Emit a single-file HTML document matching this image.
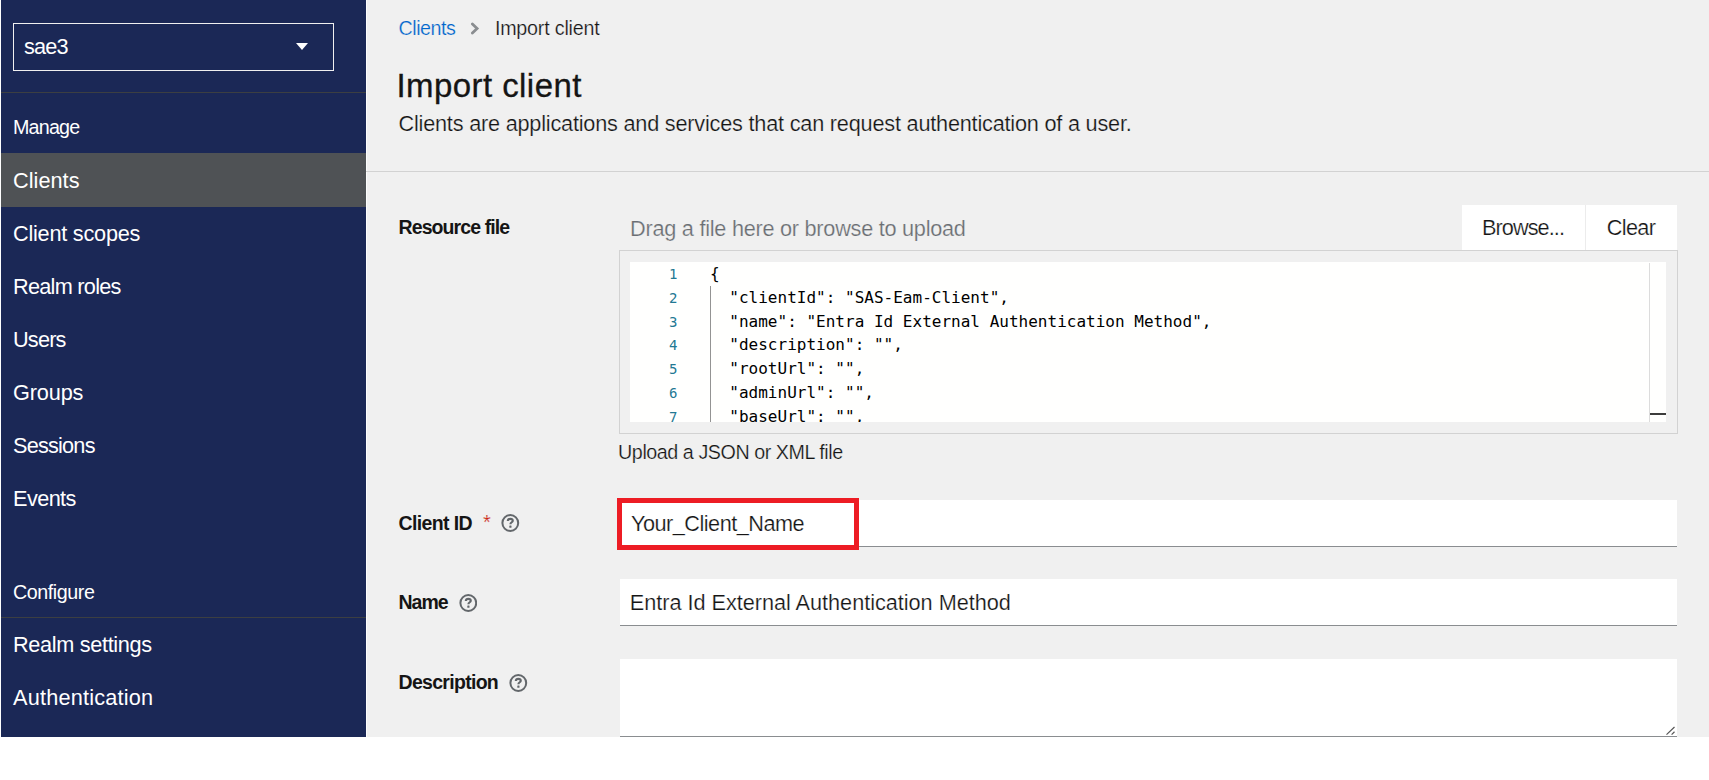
<!DOCTYPE html>
<html lang="en">
<head>
<meta charset="utf-8">
<title>Import client</title>
<style>
*{box-sizing:border-box;margin:0;padding:0}
html,body{width:1709px;height:780px;overflow:hidden;background:#fff}
body{position:relative;font-family:"Liberation Sans",sans-serif;color:#151515;font-size:21.7px}
.t{position:absolute;white-space:pre;line-height:1;-webkit-text-stroke:.22px #f0f0f0}
#side .t,.lbl{-webkit-text-stroke:0}
.in .t,.btn .t{-webkit-text-stroke:.22px #fff}

/* sidebar */
#side{position:absolute;left:1px;top:0;width:365px;height:737px;background:#1b2856;color:#fff}
#realm{position:absolute;left:12px;top:23px;width:321px;height:48px;border:1px solid #f0f0f0}
#realm .t{left:10px;top:12.4px;font-size:21.7px;letter-spacing:-.86px}
#caret{position:absolute;left:282.2px;top:19px;width:0;height:0;border-left:6.7px solid transparent;border-right:6.7px solid transparent;border-top:7.8px solid #fff}
.sep{position:absolute;left:0;width:365px;height:1px;background:#3c3f42}
.sec{font-size:19.7px;left:12px}
#nav,#nav2{list-style:none;position:absolute;left:0;width:365px}
#nav{top:153px}
#nav2{top:617.5px}
#nav li,#nav2 li{position:relative;height:53px;width:365px}
#nav li.cur{background:#4f5255;height:54px;margin-bottom:-1px}
#nav li .t,#nav2 li .t{left:12px;top:17px;font-size:21.7px}
#nav2 li .t{top:16.3px}

/* main */
#main{position:absolute;left:366px;top:0;width:1343px;height:737px;background:#f0f0f0}
#gap{position:absolute;left:0;top:0;width:1px;height:737px;background:#fdfdfd}
#hr{position:absolute;left:0;top:171px;width:1343px;height:1px;background:#d2d2d2}
.crumb{font-size:19.7px;top:19.3px}
a{color:#0066cc;text-decoration:none}
h1{font-weight:400;font-size:33px;left:30.4px;top:68.8px}
h1.t{-webkit-text-stroke:.3px #151515}
.lbl{font-weight:700;font-size:19.5px;left:32.5px}
.help{position:absolute;width:18.6px;height:18px}
.in{position:absolute;left:254px;width:1057px;background:#fff;border-bottom:1px solid #8a8d90}
.in .t{left:11px;top:13.1px}

/* file upload */
#fname{left:264.1px;top:218.4px;color:#6a6e73}
.btn{position:absolute;top:205px;height:45px;background:#fff}
.btn .t{top:12px}
#box{position:absolute;left:253px;top:250px;width:1059px;height:184px;border:1px solid #d2d2d2}
#ed{position:absolute;left:10px;top:11px;width:1036px;height:160px;background:#fffffe;overflow:hidden;font-family:"DejaVu Sans Mono","Liberation Mono",monospace;font-size:16px}
#ed ol{list-style:none}
#ed li{position:relative;height:23.75px}
#ed .n{position:absolute;left:0;width:47.5px;text-align:right;color:#237893;line-height:23.75px;top:0;font-size:14px;padding-top:1px;letter-spacing:0}
#ed .c{position:absolute;left:80px;line-height:23.75px;top:0;white-space:pre;color:#000;letter-spacing:.01px}
#guide{position:absolute;left:80px;top:24px;width:1px;height:140px;background:#939393}
#ruler{position:absolute;left:1019px;top:1px;width:1px;height:159px;background:#dcdcdc}
#cur{position:absolute;left:1020px;top:151px;width:16px;height:2px;background:#3c3c3c}
#redbox{position:absolute;left:251px;top:498px;width:242px;height:52px;border:5px solid #ed1c24}
</style>
</head>
<body>
<nav id="side">
  <div id="realm"><span class="t">sae3</span><i id="caret"></i></div>
  <div class="sep" style="top:92px"></div>
  <span class="t sec" style="top:117.7px;letter-spacing:-.8px">Manage</span>
  <div class="sep" style="top:152.5px"></div>
  <ul id="nav">
    <li class="cur"><span class="t" style="letter-spacing:.03px">Clients</span></li>
    <li><span class="t" style="letter-spacing:-.23px">Client scopes</span></li>
    <li><span class="t" style="letter-spacing:-.73px">Realm roles</span></li>
    <li><span class="t" style="letter-spacing:-.8px">Users</span></li>
    <li><span class="t" style="letter-spacing:-.14px">Groups</span></li>
    <li><span class="t" style="letter-spacing:-.79px">Sessions</span></li>
    <li><span class="t" style="letter-spacing:-.58px">Events</span></li>
  </ul>
  <span class="t sec" style="top:583.2px;letter-spacing:-.44px">Configure</span>
  <div class="sep" style="top:617px"></div>
  <ul id="nav2">
    <li><span class="t" style="letter-spacing:-.33px">Realm settings</span></li>
    <li><span class="t" style="letter-spacing:.21px">Authentication</span></li>
  </ul>
</nav>

<main id="main">
  <div id="gap"></div>
  <a class="t crumb" style="left:32.5px;letter-spacing:-.47px">Clients</a>
  <svg style="position:absolute;left:104px;top:22px" width="10" height="13" viewBox="0 0 10 13"><path d="M2.4 1.9 L7.1 6.5 L2.4 11.1" fill="none" stroke="#8a8d90" stroke-width="2.8" stroke-linecap="round"/></svg>
  <span class="t crumb" style="left:128.9px;letter-spacing:-.2px">Import client</span>
  <h1 class="t" style="letter-spacing:.44px">Import client</h1>
  <p class="t" style="left:32.5px;top:112.9px;letter-spacing:-.21px">Clients are applications and services that can request authentication of a user.</p>
  <div id="hr"></div>

  <label class="t lbl" style="top:217.9px;letter-spacing:-.9px">Resource file</label>
  <span class="t" id="fname" style="letter-spacing:-.257px">Drag a file here or browse to upload</span>
  <div class="btn" style="left:1096px;width:123px"><span class="t" style="left:19.9px;letter-spacing:-.91px">Browse...</span></div>
  <div class="btn" style="left:1220px;width:91px"><span class="t" style="left:20.8px;letter-spacing:-.67px">Clear</span></div>
  <div style="position:absolute;left:1219px;top:205px;width:1px;height:45px;background:#ececec"></div>
  <div id="box">
    <div id="ed">
      <ol>
        <li><span class="n">1</span><span class="c">{</span></li>
        <li><span class="n">2</span><span class="c">  "clientId": "SAS-Eam-Client",</span></li>
        <li><span class="n">3</span><span class="c">  "name": "Entra Id External Authentication Method",</span></li>
        <li><span class="n">4</span><span class="c">  "description": "",</span></li>
        <li><span class="n">5</span><span class="c">  "rootUrl": "",</span></li>
        <li><span class="n">6</span><span class="c">  "adminUrl": "",</span></li>
        <li><span class="n">7</span><span class="c">  "baseUrl": "",</span></li>
      </ol>
      <div id="guide"></div>
      <div id="ruler"></div>
      <div id="cur"></div>
    </div>
  </div>
  <span class="t" style="left:252.1px;top:442.6px;font-size:19.7px;letter-spacing:-.44px">Upload a JSON or XML file</span>

  <label class="t lbl" style="top:513.7px;letter-spacing:-.61px">Client ID</label>
  <span class="t" style="left:117px;top:511.5px;font-size:20px;color:#c9190b">*</span>
  <svg class="help" style="left:135px;top:514px" viewBox="0 0 18 18"><circle cx="9" cy="9" r="7.9" fill="none" stroke="#63676b" stroke-width="2"/><path d="M6.5 7 C6.6 5.5 7.7 4.9 9 4.9 C10.4 4.9 11.5 5.6 11.5 6.8 C11.5 8.3 9.1 8.3 9.1 10.3" fill="none" stroke="#63676b" stroke-width="2.1"/><rect x="8" y="11.6" width="2.2" height="2.1" rx=".5" fill="#63676b"/></svg>
  <div class="in" style="top:500px;height:47px"><span class="t" style="letter-spacing:-.51px">Your_Client_Name</span></div>
  <div id="redbox"></div>

  <label class="t lbl" style="top:593.3px;letter-spacing:-1px">Name</label>
  <svg class="help" style="left:92.8px;top:593.5px" viewBox="0 0 18 18"><circle cx="9" cy="9" r="7.9" fill="none" stroke="#63676b" stroke-width="2"/><path d="M6.5 7 C6.6 5.5 7.7 4.9 9 4.9 C10.4 4.9 11.5 5.6 11.5 6.8 C11.5 8.3 9.1 8.3 9.1 10.3" fill="none" stroke="#63676b" stroke-width="2.1"/><rect x="8" y="11.6" width="2.2" height="2.1" rx=".5" fill="#63676b"/></svg>
  <div class="in" style="top:579px;height:47px"><span class="t" style="left:9.8px;letter-spacing:-.03px">Entra Id External Authentication Method</span></div>

  <label class="t lbl" style="top:673.3px;letter-spacing:-.7px">Description</label>
  <svg class="help" style="left:143px;top:673.6px" viewBox="0 0 18 18"><circle cx="9" cy="9" r="7.9" fill="none" stroke="#63676b" stroke-width="2"/><path d="M6.5 7 C6.6 5.5 7.7 4.9 9 4.9 C10.4 4.9 11.5 5.6 11.5 6.8 C11.5 8.3 9.1 8.3 9.1 10.3" fill="none" stroke="#63676b" stroke-width="2.1"/><rect x="8" y="11.6" width="2.2" height="2.1" rx=".5" fill="#63676b"/></svg>
  <div class="in" style="top:659px;height:78px">
    <svg style="position:absolute;right:1px;bottom:0" width="11" height="11" viewBox="0 0 11 11"><path d="M1.5 9.6 L9.5 2 M6.6 9.6 L9.5 6.8" stroke="#555" stroke-width="1.2" fill="none"/></svg>
  </div>
</main>
</body>
</html>
